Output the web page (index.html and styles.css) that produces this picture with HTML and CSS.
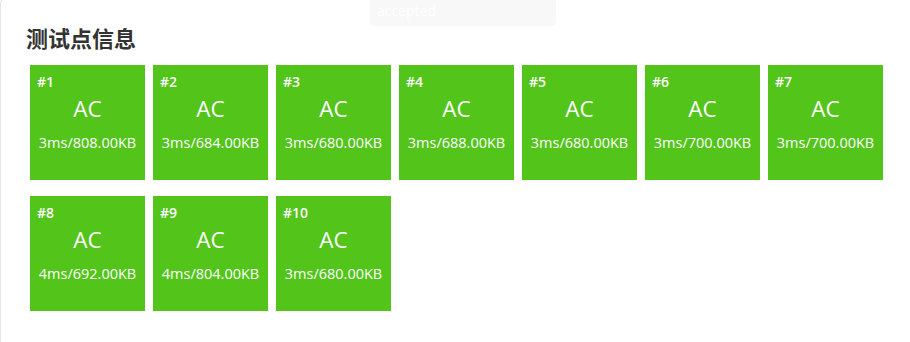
FILE: index.html
```html
<!DOCTYPE html>
<html lang="zh-CN">
<head>
    <meta charset="UTF-8">
    <meta name="viewport" content="width=device-width, initial-scale=1.0">
    <title>测试点信息</title>
    <link rel="stylesheet" href="styles.css">
</head>
<body>
    <section class="card">
        <h2 class="card-title">测试点信息</h2>

        <ul class="cases">
            <li class="case ac"><span class="case-id">#1</span><strong>AC</strong><small>3ms/808.00KB</small></li>
            <li class="case ac"><span class="case-id">#2</span><strong>AC</strong><small>3ms/684.00KB</small></li>
            <li class="case ac"><span class="case-id">#3</span><strong>AC</strong><small>3ms/680.00KB</small></li>
            <li class="case ac"><span class="case-id">#4</span><strong>AC</strong><small>3ms/688.00KB</small></li>
            <li class="case ac"><span class="case-id">#5</span><strong>AC</strong><small>3ms/680.00KB</small></li>
            <li class="case ac"><span class="case-id">#6</span><strong>AC</strong><small>3ms/700.00KB</small></li>
            <li class="case ac"><span class="case-id">#7</span><strong>AC</strong><small>3ms/700.00KB</small></li>
            <li class="case ac"><span class="case-id">#8</span><strong>AC</strong><small>4ms/692.00KB</small></li>
            <li class="case ac"><span class="case-id">#9</span><strong>AC</strong><small>4ms/804.00KB</small></li>
            <li class="case ac"><span class="case-id">#10</span><strong>AC</strong><small>3ms/680.00KB</small></li>
        </ul>
    </section>

    <div class="tooltip">accepted</div>
</body>
</html>
```

FILE: styles.css
```css
html, body {
    margin: 0;
    height: 100%;
    overflow: hidden;
}

body {
    font-family: 'Open Sans', 'Noto Sans CJK SC', sans-serif;
    background: #fff;
    color: #333;
}

.card {
    width: 940px;
    height: 346px;
    margin-top: -4px;
    padding: 0 0 0 25px;
    background: #fff;
    border: 1px solid #e6e6e6;
    border-bottom: 0;
    border-radius: 8px 8px 0 0;
    box-sizing: border-box;
}

.card-title {
    margin: 0;
    padding-top: 25px;
    font-family: 'Noto Sans CJK SC', sans-serif;
    font-size: 22px;
    font-weight: 700;
    line-height: 30px;
    color: #333;
}

.cases {
    display: flex;
    flex-wrap: wrap;
    gap: 16px 8px;
    width: 870px;
    list-style: none;
    margin: 13px 0 0;
    padding: 0 4px;
}

.case {
    width: 115px;
    height: 115px;
    display: flex;
    flex-direction: column;
    align-items: center;
    color: #fff;

    &.ac {
        background: #52c41a;
    }

    .case-id {
        align-self: flex-start;
        margin: 9px 0 0 7px;
        font-size: 14px;
        font-weight: 600;
        line-height: 16px;
    }

    strong {
        margin-top: 4px;
        font-size: 22.5px;
        font-weight: 400;
        line-height: 30px;
    }

    small {
        margin-top: 10px;
        font-size: 14.5px;
        line-height: 18px;
    }
}

.tooltip {
    position: absolute;
    top: 0;
    left: 370px;
    width: 186px;
    height: 26px;
    box-sizing: border-box;
    padding: 0 7px;
    background: #f8f8f8;
    border-radius: 0 0 4px 4px;
    color: #fff;
    font-size: 14px;
    line-height: 22px;
    overflow: hidden;
}
```
